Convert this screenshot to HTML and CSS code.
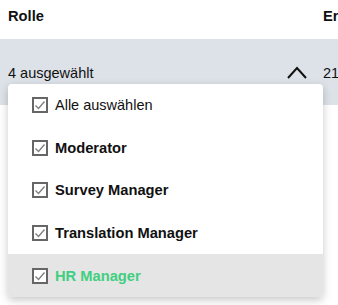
FILE: index.html
```html
<!DOCTYPE html>
<html lang="de">
<head>
  <meta charset="UTF-8">
  <title>Rollen</title>
  <link rel="stylesheet" href="styles.css">
</head>
<body>

  <div class="table">
    <div class="head">
      <div class="cell">Rolle</div>
      <div class="cell">Er</div>
    </div>
    <div class="row">
      <div class="cell select">
        <span>4 ausgewählt</span>
        <svg class="chevron" width="20" height="13" viewBox="0 0 20 13">
          <polyline points="1,12 10,2 19,12" fill="none" stroke="#111" stroke-width="2"/>
        </svg>
      </div>
      <div class="cell">21</div>
    </div>

    <ul class="menu">
      <li class="all"><svg class="box" width="16" height="16" viewBox="0 0 16 16"><rect x="1" y="1" width="14" height="14" fill="#fff" stroke="#666" stroke-width="2"/><polyline points="3.5,8.5 6.5,11.5 12.5,4.5" fill="none" stroke="#808080" stroke-width="1.4"/></svg>Alle auswählen</li>
      <li><svg class="box" width="16" height="16" viewBox="0 0 16 16"><rect x="1" y="1" width="14" height="14" fill="#fff" stroke="#666" stroke-width="2"/><polyline points="3.5,8.5 6.5,11.5 12.5,4.5" fill="none" stroke="#808080" stroke-width="1.4"/></svg>Moderator</li>
      <li><svg class="box" width="16" height="16" viewBox="0 0 16 16"><rect x="1" y="1" width="14" height="14" fill="#fff" stroke="#666" stroke-width="2"/><polyline points="3.5,8.5 6.5,11.5 12.5,4.5" fill="none" stroke="#808080" stroke-width="1.4"/></svg>Survey Manager</li>
      <li><svg class="box" width="16" height="16" viewBox="0 0 16 16"><rect x="1" y="1" width="14" height="14" fill="#fff" stroke="#666" stroke-width="2"/><polyline points="3.5,8.5 6.5,11.5 12.5,4.5" fill="none" stroke="#808080" stroke-width="1.4"/></svg>Translation Manager</li>
      <li class="active"><svg class="box" width="16" height="16" viewBox="0 0 16 16"><rect x="1" y="1" width="14" height="14" fill="#fff" stroke="#666" stroke-width="2"/><polyline points="3.5,8.5 6.5,11.5 12.5,4.5" fill="none" stroke="#808080" stroke-width="1.4"/></svg>HR Manager</li>
    </ul>
  </div>

</body>
</html>
```

FILE: styles.css
```css
body {
  margin: 0;
  font-family: "Liberation Sans", Arial, sans-serif;
  font-size: 14.5px;
  color: #111;
  background: white;
}

.table {
  position: relative;
  overflow: hidden;
  height: 305px;
}

.head, .row {
  display: grid;
  grid-template-columns: 323px 1fr;
  white-space: nowrap;
}

.head .cell:first-child, .row .cell:first-child {
  padding-left: 8px;
}

.head {
  height: 39px;
  box-sizing: border-box;
  padding-top: 7px;
  align-items: start;
  line-height: 18px;
  font-weight: bold;
  font-size: 14.7px;
}

.row {
  height: 66px;
  box-sizing: border-box;
  padding-top: 25px;
  align-items: start;
  background: #dde2e8;
  line-height: 18px;
}

.select {
  display: flex;
  align-items: center;
  justify-content: space-between;
  padding-right: 16px;
}

.chevron {
  display: block;
  margin-top: -2px;
}

.menu {
  position: absolute;
  top: 84px;
  left: 8px;
  width: 315px;
  margin: 0;
  padding: 0;
  list-style: none;
  background: white;
  border-radius: 4px;
  overflow: hidden;
  box-shadow: 0 3px 8px rgba(0,0,0,0.22);
}

.menu li {
  height: 42.5px;
  display: flex;
  align-items: center;
  gap: 7px;
  padding-left: 24px;
  font-weight: bold;
  font-size: 14.7px;
}

.menu li.all {
  font-weight: normal;
  font-size: 14.5px;
}

.menu li.active {
  height: 43px;
  background: #e5e5e5;
  color: #3fcf80;
}

.box {
  display: block;
  flex: none;
}
```
